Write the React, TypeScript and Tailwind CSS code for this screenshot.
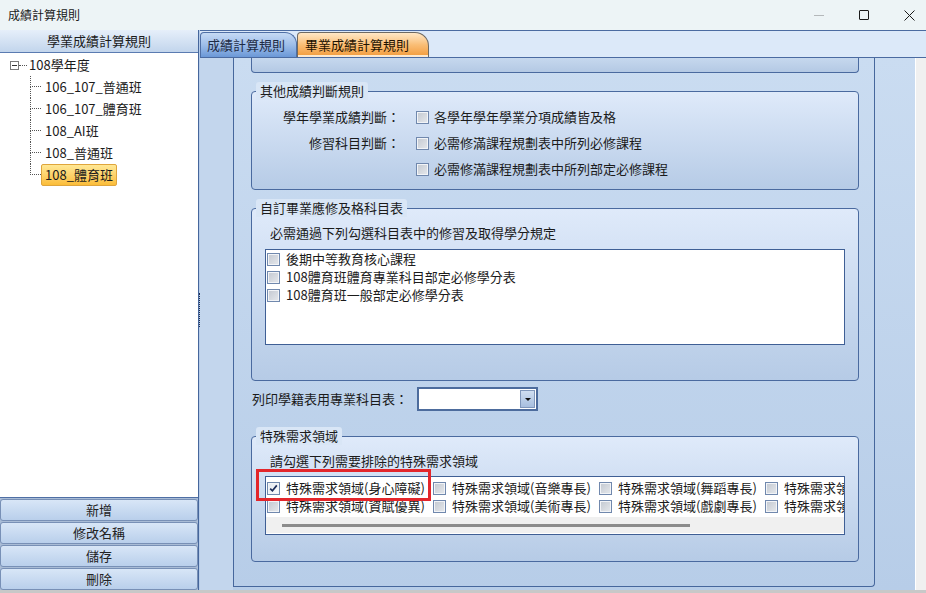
import React from "react";

const treeItems = ["106_107_普通班", "106_107_體育班", "108_AI班", "108_普通班", "108_體育班"];
const leftButtons = ["新增", "修改名稱", "儲存", "刪除"];
const subjectTables = ["後期中等教育核心課程", "108體育班體育專業科目部定必修學分表", "108體育班一般部定必修學分表"];
const specialRows = [
  ["特殊需求領域(身心障礙)", "特殊需求領域(音樂專長)", "特殊需求領域(舞蹈專長)", "特殊需求領域(體育專長)"],
  ["特殊需求領域(資賦優異)", "特殊需求領域(美術專長)", "特殊需求領域(戲劇專長)", "特殊需求領域(其他)"],
];

const Check = ({ checked = false }: { checked?: boolean }) => (
  <span className="flex h-[13px] w-[13px] shrink-0 border border-[#7088ad] bg-[#f2f4f7] p-px">
    <span
      className={
        checked
          ? "flex h-full w-full items-center justify-center bg-linear-to-br from-[#e4e9f0] to-[#fafbfc]"
          : "flex h-full w-full bg-linear-to-br from-[#c6cbd3] to-[#e3e6ea]"
      }
    >
      {checked && (
        <svg width="9" height="9" viewBox="0 0 9 9">
          <path d="M1.2 4.6 L3.4 6.8 L7.8 1.4" fill="none" stroke="#1c2d5a" strokeWidth="1.7" />
        </svg>
      )}
    </span>
  </span>
);

const GroupBox = ({ title, className, children }: { title: string; className: string; children: React.ReactNode }) => (
  <fieldset
    className={`min-w-0 rounded-[4px] border border-[#4a6a9f] bg-linear-to-b from-[#dfeafa] to-[#b6cbe6] ${className}`}
  >
    <legend className="ml-[4px] rounded-t-[3px] bg-[#d9e6f6] px-[4px] text-[13px] leading-[18px]">{title}</legend>
    {children}
  </fieldset>
);

const App = () => {
  return (
    <div className="relative flex h-[593px] w-[926px] flex-col overflow-hidden bg-[#edf4f6] font-['Noto_Sans_CJK_TC','Noto_Sans',sans-serif] text-[13px] leading-[18px] text-[#1b1b1b]">
      {/* title bar */}
      <div className="flex h-[30px] items-center justify-between pl-[8px] pr-[11px]">
        <span className="text-[12px] text-[#1a1a1a]">成績計算規則</span>
        <div className="flex items-center gap-[35px]">
          <span className="h-px w-[10px] bg-[#b4b8ba]" />
          <span className="h-[10px] w-[10px] rounded-[1px] border border-[#1a1a1a]" />
          <svg width="11" height="11" viewBox="0 0 11 11">
            <path d="M0.5 0.5 L10.5 10.5 M10.5 0.5 L0.5 10.5" stroke="#1a1a1a" strokeWidth="1" />
          </svg>
        </div>
      </div>

      <div className="flex h-[560px]">
        {/* left side */}
        <aside className="flex w-[198px] flex-col">
          <div className="flex h-[23px] items-center justify-center border-b border-[#5a7bb1] bg-linear-to-b from-[#e6effa] to-[#c2d5ec]">
            學業成績計算規則
          </div>
          <div className="flex-1 border-b border-[#4f6fa5] bg-white pt-px">
            <div className="flex h-[22px] items-center pl-[10px]">
              <span className="flex h-[9px] w-[9px] items-center justify-center border border-[#7a7a7a] bg-white">
                <span className="h-px w-[5px] bg-[#333]" />
              </span>
              <span className="w-[8px] border-t border-dotted border-[#555]" />
              <span className="ml-[2px]">108學年度</span>
            </div>
            {treeItems.map((t, i) => {
              const last = i === treeItems.length - 1;
              return (
                <div key={t} className="flex h-[22px] pl-[30px]">
                  <div className="flex w-[11px] flex-col">
                    <div className="h-[11px] border-b border-l border-dotted border-[#555]" />
                    <div className={last ? "flex-1" : "flex-1 border-l border-dotted border-[#555]"} />
                  </div>
                  <span
                    className={
                      last
                        ? "flex items-center rounded-[2px] border border-[#dfa53c] bg-linear-to-b from-[#ffe894] to-[#fbbd37] px-[3px]"
                        : "flex items-center border border-transparent px-[3px]"
                    }
                  >
                    {t}
                  </span>
                </div>
              );
            })}
          </div>
          <div className="flex flex-col bg-[#a9bcd6]">
            {leftButtons.map((b) => (
              <div
                key={b}
                className="mt-px flex h-[22px] items-center justify-center rounded-[3px] border border-[#7890b6] bg-linear-to-b from-[#d8e6f7] to-[#b9cfeb] text-[#222]"
              >
                {b}
              </div>
            ))}
          </div>
        </aside>

        {/* splitter */}
        <div className="flex w-[2px] flex-col justify-center border-l border-[#45669c] bg-[#b6cce9]">
          <div className="h-[34px] border-l border-dotted border-[#1e2f55]" />
        </div>

        {/* right side */}
        <main className="flex flex-1 flex-col">
          <div className="flex h-[28px] items-end border-y border-[#4b6ba1] bg-[#dce9f9]">
            <div className="flex h-[25px] w-[97px] items-center rounded-tl-[4px] rounded-tr-[12px] border border-b-0 border-[#4f6fa5] bg-linear-to-b from-[#c6daf4] via-[#9dbde9] to-[#6b98d7] pl-[6px] text-[#1e2b45]">
              成績計算規則
            </div>
            <div className="flex h-[25px] w-[132px] items-center rounded-tl-[4px] rounded-tr-[14px] border border-b-0 border-[#6f6a62] bg-linear-to-b from-[#ffe8c6] via-[#f9bd74] to-[#f29a36] pl-[7px] text-[#1e1200] shadow-[inset_0_-2px_0_#fde9cf]">
              畢業成績計算規則
            </div>
          </div>

          <div className="flex flex-1 bg-linear-to-b from-[#cadcf1] to-[#b7cde8]">
            <div className="w-[33px] bg-[#c3d6ed]" />
            <div className="flex h-[529px] w-[642px] flex-col rounded-br-[4px] border-x border-b border-[#46679c] pl-[17px] pr-[15px]">
              <div className="h-[15px] shrink-0 rounded-b-[4px] border-x border-b border-[#4a6a9f] bg-linear-to-b from-[#c6d8ee] to-[#b4c9e4]" />

              <GroupBox title="其他成績判斷規則" className="mt-[9px] pb-[7px] pt-[4px]">
                <div className="flex h-[26px] items-center">
                  <span className="w-[148px] text-right">學年學業成績判斷：</span>
                  <span className="ml-[16px]"><Check /></span>
                  <span className="ml-[5px]">各學年學年學業分項成績皆及格</span>
                </div>
                <div className="flex h-[26px] items-center">
                  <span className="w-[148px] text-right">修習科目判斷：</span>
                  <span className="ml-[16px]"><Check /></span>
                  <span className="ml-[5px]">必需修滿課程規劃表中所列必修課程</span>
                </div>
                <div className="flex h-[26px] items-center pl-[164px]">
                  <Check />
                  <span className="ml-[5px]">必需修滿課程規劃表中所列部定必修課程</span>
                </div>
              </GroupBox>

              <GroupBox title="自訂畢業應修及格科目表" className="mt-[9px] pb-[35px] pt-[6px]">
                <div className="px-[13px]">
                  <div className="flex h-[20px] items-center pl-[5px]">必需通過下列勾選科目表中的修習及取得學分規定</div>
                  <div className="mt-[6px] h-[96px] border border-[#3f5f95] bg-white pl-px">
                    {subjectTables.map((t) => (
                      <div key={t} className="flex h-[18px] items-center gap-[6px]">
                        <Check />
                        {t}
                      </div>
                    ))}
                  </div>
                </div>
              </GroupBox>

              <div className="mt-[6px] flex h-[24px] items-center pl-px">
                <span className="w-[165px]">列印學籍表用專業科目表：</span>
                <div className="flex h-[24px] w-[121px] justify-end border-2 border-[#4d6c9d] bg-white p-px">
                  <div className="flex w-[15px] items-center justify-center border border-[#8097bb] bg-linear-to-b from-[#cfdef1] to-[#a8bfdf]">
                    <svg width="6" height="3" viewBox="0 0 6 3">
                      <path d="M0 0 H6 L3 3 Z" fill="#111" />
                    </svg>
                  </div>
                </div>
              </div>

              <GroupBox title="特殊需求領域" className="mt-[16px] pb-[26px] pt-[6px]">
                <div className="px-[13px]">
                  <div className="flex h-[20px] items-center pl-[5px]">請勾選下列需要排除的特殊需求領域</div>
                  <div className="mt-[5px] h-[59px] overflow-hidden border border-[#3f5f95] bg-white">
                    <div className="pl-px pt-[2px]">
                      {specialRows.map((row, ri) => (
                        <div key={ri} className="flex h-[18px] items-center whitespace-nowrap">
                          {row.map((c, ci) => (
                            <div key={c} className="flex w-[166px] shrink-0 items-center gap-[6px]">
                              <Check checked={ri === 0 && ci === 0} />
                              {c}
                            </div>
                          ))}
                        </div>
                      ))}
                    </div>
                    <div className="mt-[2px] flex h-[16px] items-center bg-[#f0f0f0]">
                      <div className="ml-[16px] h-[3px] w-[408px] bg-[#8c8c8c]" />
                    </div>
                  </div>
                </div>
              </GroupBox>
            </div>
            <div className="w-[40px]" />
            <div className="flex-1 border-l border-white bg-[#f0f0f0]" />
          </div>
        </main>
      </div>

      <div className="h-[3px] bg-[#c8c8c8]" />

      {/* red highlight annotation */}
      <div className="pointer-events-none absolute left-[256px] top-[469px] h-[32px] w-[175px] border-[3px] border-[#e3262b]" />
    </div>
  );
};

export default App;
